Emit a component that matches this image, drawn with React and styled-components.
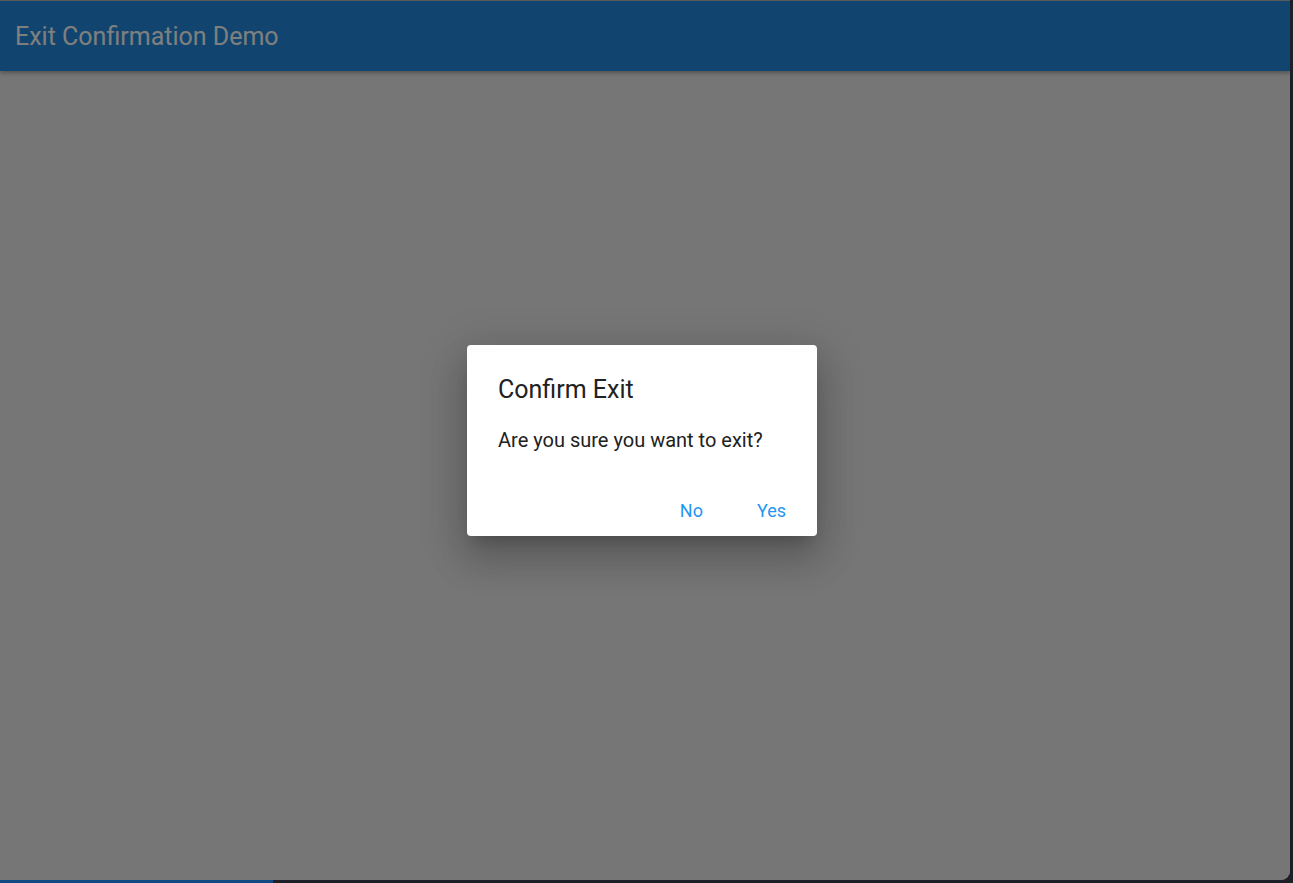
import React from "react"
import styled, { createGlobalStyle } from "styled-components"

const GlobalStyle = createGlobalStyle`
  html, body {
    margin: 0;
    padding: 0;
    background: #1d2127;
    font-family: Roboto, "Liberation Sans", sans-serif;
  }
`

const Screen = styled.div`
  width: 1293px;
  height: 883px;
  display: flex;
  flex-direction: column;
  overflow: hidden;
`

const Frame = styled.div`
  position: relative;
  width: 1290px;
  height: 879px;
  border-top: 1px solid #5a5a5a;
  border-bottom-right-radius: 9px;
  background: #ececec;
  overflow: hidden;
  display: flex;
  flex-direction: column;
`

const AppBar = styled.header`
  height: 70px;
  background: #2289de;
  display: flex;
  align-items: center;
  padding-left: 15px;
  box-shadow: 0 2px 4px rgba(0, 0, 0, 0.3);
`

const AppTitle = styled.h1`
  margin: 0;
  font-size: 25px;
  font-weight: 400;
  color: #ffffff;
`

const Backdrop = styled.div`
  position: absolute;
  inset: 0;
  background: rgba(0, 0, 0, 0.5);
  display: flex;
  align-items: center;
  justify-content: center;
  padding-right: 6px;
`

const Dialog = styled.div`
  width: 350px;
  box-sizing: border-box;
  background: #ffffff;
  border-radius: 4px;
  padding: 29px 19px 8px 31px;
  display: flex;
  flex-direction: column;
  box-shadow: 0 11px 15px -7px rgba(0, 0, 0, 0.2),
    0 24px 38px 3px rgba(0, 0, 0, 0.14), 0 9px 46px 8px rgba(0, 0, 0, 0.12);
`

const DialogTitle = styled.h2`
  margin: 0;
  font-size: 25px;
  line-height: 32px;
  font-weight: 400;
  color: #212121;
`

const DialogText = styled.p`
  margin: 22px 0 0;
  font-size: 20px;
  line-height: 24px;
  color: #212121;
`

const Actions = styled.div`
  margin-top: 40px;
  display: flex;
  justify-content: flex-end;
  gap: 30px;
`

const TextButton = styled.button`
  height: 36px;
  padding: 0 12px;
  border: none;
  background: transparent;
  font-family: inherit;
  font-size: 18px;
  color: #2196f3;
  cursor: pointer;
`

const TaskStrip = styled.div`
  height: 3px;
  display: flex;
`

const TaskSegment = styled.div`
  width: ${(p) => p.$w}px;
  background: ${(p) => p.$color};
`

export default function App() {
  return (
    <>
      <GlobalStyle />
      <Screen>
        <Frame>
          <AppBar>
            <AppTitle>Exit Confirmation Demo</AppTitle>
          </AppBar>
          <Backdrop>
            <Dialog role="dialog">
              <DialogTitle>Confirm Exit</DialogTitle>
              <DialogText>Are you sure you want to exit?</DialogText>
              <Actions>
                <TextButton>No</TextButton>
                <TextButton>Yes</TextButton>
              </Actions>
            </Dialog>
          </Backdrop>
        </Frame>
        <TaskStrip>
          <TaskSegment $w={273} $color="#0f4a82" />
        </TaskStrip>
      </Screen>
    </>
  )
}
